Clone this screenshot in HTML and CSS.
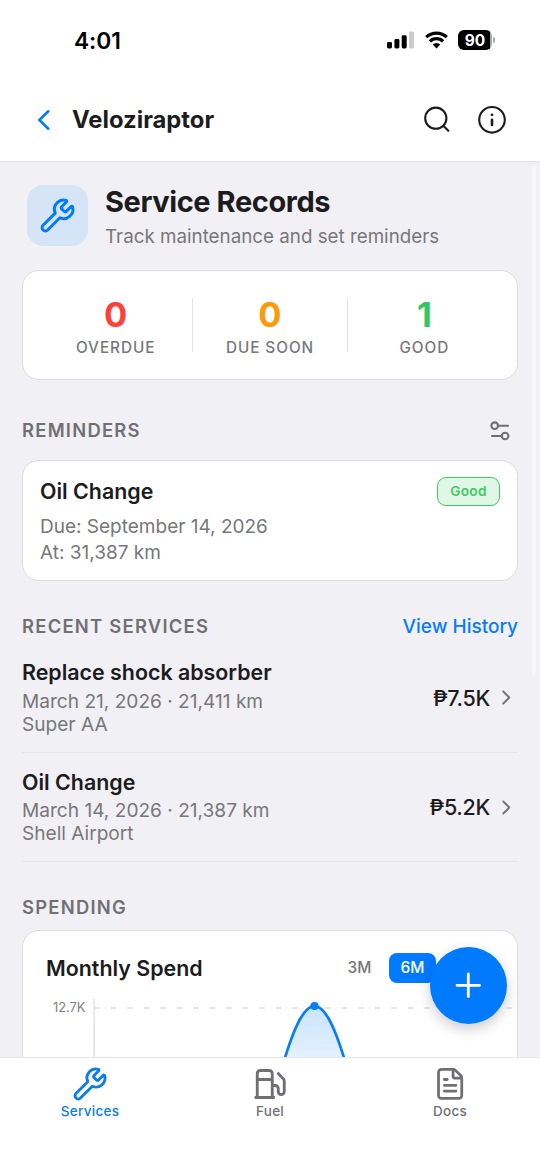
FILE: index.html
```html
<!DOCTYPE html>
<html lang="en">
<head>
<meta charset="utf-8">
<title>Veloziraptor</title>
<link rel="stylesheet" href="styles.css">
</head>
<body>
<div class="phone">
  <div class="status-bar">
    <span class="clock">4:01</span>
    <div class="status-icons">
      <svg class="signal" width="27" height="18" viewBox="0 0 27 18"><rect x="0" y="11" width="5" height="6.5" rx="1.4"/><rect x="7.4" y="8" width="5" height="9.5" rx="1.4"/><rect x="14.7" y="4.3" width="5" height="13.2" rx="1.4"/><rect class="dim" x="22" y="0.5" width="5" height="17" rx="1.4"/></svg>
      <svg class="wifi" width="23" height="18" viewBox="0 0 23 18"><path d="M1.2 6.2A14.8 14.8 0 0 1 21.8 6.2M5 10.4A9.2 9.2 0 0 1 18 10.4"/><path class="dot" d="M7.7 13.6a5.5 5.5 0 0 1 7.6 0L11.5 17.5z"/></svg>
      <div class="battery"><span class="battery-level">90</span><span class="battery-cap"></span></div>
    </div>
  </div>
  <header class="app-bar">
    <svg class="back" width="14" height="22" viewBox="0 0 14 22"><path d="M11.3 2.3 2.4 11l8.9 8.7"/></svg>
    <h1 class="app-title">Veloziraptor</h1>
    <svg class="bar-icon search" width="28" height="28" viewBox="0 0 28 28"><circle cx="12.8" cy="12.2" r="10.6"/><path d="m20.3 19.7 5 5"/></svg>
    <svg class="bar-icon" width="30" height="30" viewBox="0 0 30 30"><circle cx="15" cy="14.8" r="12.8"/><path class="info-stem" d="M15 14.8v5.2"/><circle class="info-dot" cx="15" cy="9.8" r="1.4"/></svg>
  </header>

  <main class="content">
    <section class="hero">
      <div class="hero-icon"><svg class="line-icon" width="37" height="37" viewBox="0 0 24 24"><path d="M14.7 6.3a1 1 0 0 0 0 1.4l1.6 1.6a1 1 0 0 0 1.4 0l3.106-3.105c.32-.322.863-.22.983.218a6 6 0 0 1-8.259 7.057l-7.91 7.91a1 1 0 0 1-2.999-3l7.91-7.91a6 6 0 0 1 7.057-8.259c.438.12.54.662.218.984z"/></svg></div>
      <div>
        <h2 class="hero-title">Service Records</h2>
        <p class="hero-sub">Track maintenance and set reminders</p>
      </div>
    </section>

    <section class="card stats">
      <div class="stat"><b class="stat-value red">0</b><span class="stat-label">OVERDUE</span></div>
      <div class="stat"><b class="stat-value orange">0</b><span class="stat-label">DUE SOON</span></div>
      <div class="stat"><b class="stat-value green">1</b><span class="stat-label">GOOD</span></div>
    </section>

    <div class="section-head reminders-head">
      <h3 class="section-title">REMINDERS</h3>
      <svg class="filter" width="20" height="20" viewBox="0 0 20 20"><circle cx="4.7" cy="4.7" r="3.3"/><path d="M8.2 4.7h9.8M2 15h9.6"/><circle cx="15.1" cy="15" r="3.3"/></svg>
    </div>
    <section class="card reminder">
      <div class="reminder-top"><h4 class="item-title">Oil Change</h4><span class="badge">Good</span></div>
      <p class="reminder-line due">Due: September 14, 2026</p>
      <p class="reminder-line">At: 31,387 km</p>
    </section>

    <div class="section-head recent-head">
      <h3 class="section-title">RECENT SERVICES</h3>
      <a class="link">View History</a>
    </div>
    <ul class="services">
      <li class="service">
        <div class="service-info"><h4 class="item-title">Replace shock absorber</h4><p class="service-line">March 21, 2026 · 21,411 km</p><p class="service-line">Super AA</p></div>
        <span class="price">₱7.5K</span>
        <svg class="chevron" width="9" height="15" viewBox="0 0 9 15"><path d="m1.3 1.5 6 6-6 6"/></svg>
      </li>
      <li class="service">
        <div class="service-info"><h4 class="item-title">Oil Change</h4><p class="service-line">March 14, 2026 · 21,387 km</p><p class="service-line">Shell Airport</p></div>
        <span class="price">₱5.2K</span>
        <svg class="chevron" width="9" height="15" viewBox="0 0 9 15"><path d="m1.3 1.5 6 6-6 6"/></svg>
      </li>
    </ul>

    <div class="section-head spending-head"><h3 class="section-title">SPENDING</h3></div>
    <section class="card spending">
      <div class="spend-top">
        <h4 class="item-title spend-title">Monthly Spend</h4>
        <span class="range">3M</span>
        <span class="range active">6M</span>
      </div>
      <svg class="chart" width="494" height="90" viewBox="0 0 494 90">
        <defs><linearGradient id="area" x1="0" y1="0" x2="0" y2="1"><stop offset="0" stop-color="#007aff" stop-opacity=".21"/><stop offset="1" stop-color="#007aff" stop-opacity=".1"/></linearGradient></defs>
        <path class="axis" d="M71.2 8v82"/>
        <path class="grid" d="M71.2 17H490"/>
        <text class="tick" x="62.5" y="21.3" text-anchor="end">12.7K</text>
        <path fill="url(#area)" d="M261 70C270 40 280 15 291.5 15S313 40 322 70z"/>
        <path class="curve" d="M261 70C270 40 280 15 291.5 15S313 40 322 70"/>
        <circle class="point" cx="291.5" cy="15" r="4.1"/>
      </svg>
    </section>
  </main>

  <nav class="tabs">
    <div class="tab active"><svg class="line-icon" width="36" height="36" viewBox="0 0 24 24"><path d="M14.7 6.3a1 1 0 0 0 0 1.4l1.6 1.6a1 1 0 0 0 1.4 0l3.106-3.105c.32-.322.863-.22.983.218a6 6 0 0 1-8.259 7.057l-7.91 7.91a1 1 0 0 1-2.999-3l7.91-7.91a6 6 0 0 1 7.057-8.259c.438.12.54.662.218.984z"/></svg><span>Services</span></div>
    <div class="tab"><svg class="line-icon" width="36" height="36" viewBox="0.5 0 24 24"><path d="M14 13h2a2 2 0 0 1 2 2v2a2 2 0 0 0 4 0v-6.998a2 2 0 0 0-.59-1.42L18 5M14 21V5a2 2 0 0 0-2-2H6a2 2 0 0 0-2 2v16M3 21h12M4 9h10"/></svg><span>Fuel</span></div>
    <div class="tab"><svg class="line-icon" width="36" height="36" viewBox="-.5 -.3 24.8 24.8"><path d="M6 22a2 2 0 0 1-2-2V4a2 2 0 0 1 2-2h8a2.4 2.4 0 0 1 1.704.706l3.588 3.588A2.4 2.4 0 0 1 20 8v12a2 2 0 0 1-2 2zM14 2v5a1 1 0 0 0 1 1h5M10 9H8M16 13H8M16 17H8"/></svg><span>Docs</span></div>
  </nav>

  <button class="fab" aria-label="Add"><svg width="29" height="29" viewBox="0 0 29 29"><path d="M14.3 3v22.6M3 14.3h22.6"/></svg></button>
  <div class="scroll-thumb"></div>
</div>
</body>
</html>
```

FILE: styles.css
```css
* { box-sizing: border-box; margin: 0; padding: 0; }
body { font-family: Inter, "Liberation Sans", sans-serif; color: #1c1c1e; background: #fff; }
svg { display: block; fill: none; flex: none; }
.phone { position: relative; width: 540px; height: 1171px; display: flex; flex-direction: column; overflow: hidden; background: #fff; }

.status-bar { height: 80px; flex: none; display: flex; justify-content: space-between; align-items: center; padding: 0 45px 0 74px; color: #000; }
.clock { font-size: 22.8px; font-weight: 600; letter-spacing: -0.1px; }
.status-icons { display: flex; align-items: center; gap: 10.5px; }
.signal { fill: #000; }
.signal .dim { fill: #ccc; }
.wifi { stroke: #000; stroke-width: 3.2; }
.wifi .dot { fill: #000; stroke: none; }
.battery { display: flex; align-items: center; gap: 1px; }
.battery-level { width: 34px; height: 19.5px; border-radius: 6px; background: linear-gradient(90deg, #000 93%, #aaa 93%); color: #fff; font-size: 15.5px; font-weight: 700; line-height: 21px; text-align: center; }
.battery-cap { width: 2px; height: 6px; border-radius: 0 2px 2px 0; background: #aaa; }

.app-bar { height: 82px; flex: none; display: flex; align-items: center; padding: 0 33px 2px 37px; border-bottom: 1.5px solid #e3e3e7; }
.back { stroke: #007aff; stroke-width: 2.6; stroke-linecap: round; }
.app-title { flex: 1; padding-left: 21px; font-size: 23.8px; font-weight: 700; letter-spacing: 0; }
.bar-icon { stroke: #1c1c1e; stroke-width: 2.1; stroke-linecap: round; }
.search { margin-right: 26px; }
.info-stem { stroke-width: 2.6; }
.info-dot { fill: #1c1c1e; stroke: none; }

.content { flex: 1; min-height: 0; overflow: hidden; padding: 23px 22px 0; background: #f1f0f5; }
.hero { display: flex; gap: 17px; height: 85px; padding-left: 5px; }
.hero-icon { width: 61px; height: 61px; border-radius: 16px; background: #d6e4f7; color: #007aff; display: grid; place-items: center; }
.line-icon { stroke: currentColor; stroke-width: 1.9; stroke-linecap: round; stroke-linejoin: round; }
.hero-title { font-size: 29px; line-height: 34px; font-weight: 700; letter-spacing: -0.42px; }
.hero-sub { margin-top: 6px; font-size: 18.8px; line-height: 24px; color: #77777a; }

.card { background: #fff; border: 1.3px solid #dddde1; border-radius: 17px; }
.stats { height: 110px; display: flex; align-items: center; padding: 0 16px; }
.stat { flex: 1; height: 54px; padding-top: 4px; display: flex; flex-direction: column; align-items: center; justify-content: center; }
.stat + .stat { border-left: 1.5px solid #e3e3e6; }
.stat-value { font-size: 34.5px; line-height: 36px; font-weight: 700; }
.stat-label { margin-top: 5px; font-size: 15.3px; line-height: 20px; font-weight: 500; letter-spacing: 0.95px; color: #77777a; }
.red { color: #fc4138; } .orange { color: #fd9a0a; } .green { color: #36c65c; }

.section-head { display: flex; justify-content: space-between; align-items: center; }
.section-title { padding-bottom: 2px; font-size: 18.4px; font-weight: 600; letter-spacing: 1.25px; color: #707073; }
.reminders-head { height: 80px; padding: 21px 8px 0 0; }
.filter { stroke: #707073; stroke-width: 2.1; stroke-linecap: round; }
.reminder { height: 121px; padding: 15px 17px; }
.reminder-top { display: flex; justify-content: space-between; align-items: center; height: 30px; }
.item-title { font-size: 21.4px; line-height: 26px; font-weight: 600; letter-spacing: 0; }
.badge { width: 63px; height: 29px; border: 1.6px solid #3ec963; border-radius: 9px; background: #e1f7e6; color: #3ec963; font-size: 13.7px; line-height: 27px; font-weight: 600; text-align: center; letter-spacing: 0.3px; }
.reminder-line { font-size: 19px; line-height: 26px; color: #77777a; }
.due { margin-top: 8px; }

.recent-head { height: 62px; padding-top: 29px; }
.link { color: #087cf8; font-size: 19px; font-weight: 500; }
.services { list-style: none; }
.service { height: 109.5px; padding: 13px 7px 12px 0; display: flex; align-items: center; border-bottom: 1.3px solid #e6e6ea; }
.service-info { flex: 1; }
.service-line { font-size: 19.1px; line-height: 23.3px; color: #77777a; }
.item-title + .service-line { margin-top: 4.2px; }
.price { margin-right: 12px; font-size: 21.5px; font-weight: 500; letter-spacing: -0.3px; }
.chevron { stroke: #77777a; stroke-width: 2; stroke-linecap: round; stroke-linejoin: round; }

.spending-head { height: 68px; padding-top: 23px; }
.spending { height: 300px; padding-top: 21px; }
.spend-top { display: flex; align-items: center; height: 32px; padding: 0 81px 0 23px; }
.spend-title { flex: 1; }
.range { width: 47px; height: 30px; margin-left: 6px; border-radius: 8px; font-size: 15.5px; line-height: 30px; font-weight: 500; text-align: center; color: #77777a; }
.range.active { background: #007aff; color: #fff; }
.chart { margin-top: 7px; }
.axis { stroke: #e0e0e3; stroke-width: 1.5; }
.grid { stroke: #dedee1; stroke-width: 1.3; stroke-dasharray: 5.5 11; }
.tick { fill: #808083; font-size: 12.9px; }
.curve { stroke: #087ef2; stroke-width: 2.7; }
.point { fill: #087ef2; }

.tabs { height: 114px; flex: none; display: grid; grid-template-columns: repeat(3, 1fr); padding-top: 8px; border-top: 1.3px solid #e6e6ea; background: #fff; }
.tab { display: flex; flex-direction: column; align-items: center; color: #707073; font-size: 13.5px; line-height: 18px; font-weight: 500; letter-spacing: 0.3px; }
.tab.active { color: #087cf8; }

.fab { position: absolute; left: 430px; top: 947px; width: 77px; height: 77px; border: 0; border-radius: 50%; background: #007aff; display: grid; place-items: center; box-shadow: 0 5px 14px rgba(0, 0, 0, 0.2); }
.fab svg { stroke: #fff; stroke-width: 2.8; stroke-linecap: round; }
.scroll-thumb { position: absolute; left: 532px; top: 166px; width: 4px; height: 510px; border-radius: 2px; background: #f7f7fa; }
```
